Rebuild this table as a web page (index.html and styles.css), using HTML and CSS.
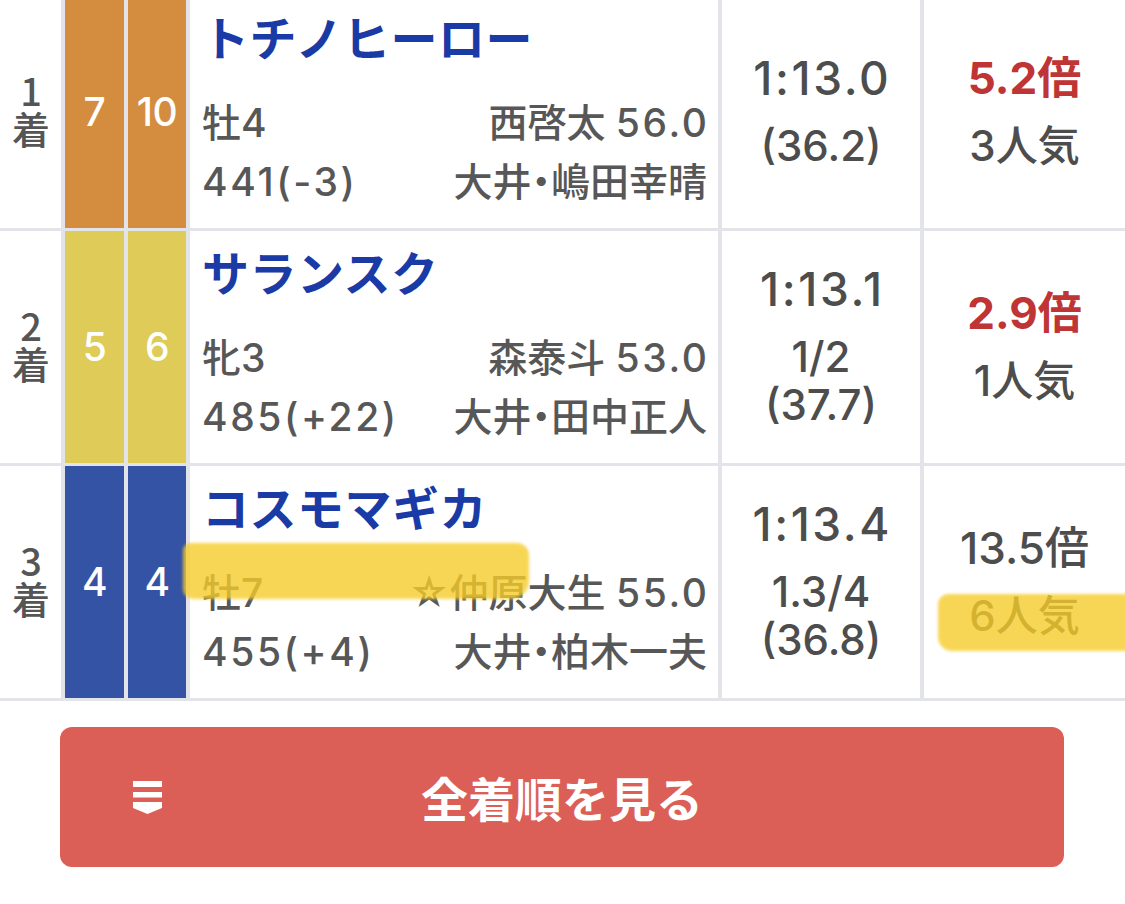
FILE: index.html
```html
<!DOCTYPE html>
<html lang="ja">
<head>
<meta charset="utf-8">
<title>着順</title>
<link rel="stylesheet" href="styles.css">
</head>
<body>
<div class="page">
  <div class="result-table">
    <div class="row">
      <div class="cell rank"><span class="rank-text">1着</span></div>
      <div class="cell waku waku-orange">7</div>
      <div class="cell waku waku-orange">10</div>
      <div class="cell horse">
        <div class="horse-name">トチノヒーロー</div>
        <div class="details">
          <div class="detail-row"><span>牡<span class="num">4</span></span><span>西啓太 <span class="num end">56.0</span></span></div>
          <div class="detail-row"><span class="num">441(-3)</span><span>大井・嶋田幸晴</span></div>
        </div>
      </div>
      <div class="cell stack">
        <div class="main-line">1:13.0</div>
        <div class="sub-line">(36.2)</div>
      </div>
      <div class="cell stack">
        <div class="odds-line odds-hot">5.2倍</div>
        <div class="sub-line">3人気</div>
      </div>
    </div>
    <div class="row">
      <div class="cell rank"><span class="rank-text">2着</span></div>
      <div class="cell waku waku-yellow">5</div>
      <div class="cell waku waku-yellow">6</div>
      <div class="cell horse">
        <div class="horse-name">サランスク</div>
        <div class="details">
          <div class="detail-row"><span>牝<span class="num">3</span></span><span>森泰斗 <span class="num end">53.0</span></span></div>
          <div class="detail-row"><span class="num">485(+22)</span><span>大井・田中正人</span></div>
        </div>
      </div>
      <div class="cell stack">
        <div class="main-line">1:13.1</div>
        <div class="sub-line">1/2</div>
        <div class="sub-line">(37.7)</div>
      </div>
      <div class="cell stack">
        <div class="odds-line odds-hot">2.9倍</div>
        <div class="sub-line">1人気</div>
      </div>
    </div>
    <div class="row">
      <div class="cell rank"><span class="rank-text">3着</span></div>
      <div class="cell waku waku-blue">4</div>
      <div class="cell waku waku-blue">4</div>
      <div class="cell horse">
        <div class="horse-name">コスモマギカ</div>
        <div class="details">
          <div class="detail-row"><span>牡<span class="num">7</span></span><span>☆仲原大生 <span class="num end">55.0</span></span></div>
          <div class="detail-row"><span class="num">455(+4)</span><span>大井・柏木一夫</span></div>
        </div>
      </div>
      <div class="cell stack">
        <div class="main-line">1:13.4</div>
        <div class="sub-line">1.3/4</div>
        <div class="sub-line">(36.8)</div>
      </div>
      <div class="cell stack">
        <div class="odds-line">13.5倍</div>
        <div class="sub-line">6人気</div>
      </div>
    </div>
  </div>

  <button class="all-btn" type="button">
    <span class="btn-icon">
      <svg width="29" height="33" viewBox="0 0 29 33" aria-hidden="true">
        <rect x="0" y="0" width="29" height="6" fill="#fff"/>
        <rect x="0" y="11" width="29" height="5.5" fill="#fff"/>
        <polygon points="0,21 29,21 29,27 14.5,33 0,27" fill="#fff"/>
      </svg>
    </span>
    <span class="btn-label">全着順を見る</span>
    <span class="btn-spacer"></span>
  </button>

  <div class="marker marker-name"></div>
  <div class="marker marker-pop"></div>
</div>
</body>
</html>
```

FILE: styles.css
```css
html, body {
  margin: 0;
  padding: 0;
  background: #ffffff;
}

body {
  width: 1125px;
  height: 904px;
  overflow: hidden;
  font-family: "Inter", "Noto Sans CJK JP", "Noto Sans", sans-serif;
  color: #555555;
}

.page {
  position: relative;
  width: 1125px;
  height: 904px;
}

.result-table {
  display: flex;
  flex-direction: column;
  gap: 3px;
  margin-top: -4px;
  padding-bottom: 3px;
  background: #e3e3ea;
}

.row {
  display: grid;
  grid-template-columns: 61px 59px 58px 528px 198px 1fr;
  column-gap: 4px;
  height: 232px;
}

.cell {
  background: #ffffff;
  box-sizing: border-box;
}

.rank {
  display: flex;
  align-items: center;
  justify-content: center;
  color: #555555;
  padding-bottom: 2px;
}

.rank-text {
  writing-mode: vertical-rl;
  text-orientation: upright;
  font-family: "Noto Sans CJK JP", sans-serif;
  font-size: 38px;
  line-height: 40px;
  font-weight: 500;
}

.waku {
  display: flex;
  align-items: center;
  justify-content: center;
  color: #ffffff;
  font-size: 39px;
  font-weight: 500;
  letter-spacing: -0.5px;
  padding-bottom: 2px;
}

.waku-orange { background: #d48c3e; }
.waku-yellow { background: #dfcb58; }
.waku-blue { background: #3553a4; }

.horse {
  display: flex;
  flex-direction: column;
  padding: 13px 11px 17px 12px;
}

.horse-name {
  font-size: 47px;
  line-height: 60px;
  font-weight: 700;
  letter-spacing: 0.5px;
  color: #1a3aa6;
  white-space: nowrap;
}

.details {
  margin-top: auto;
}

.detail-row {
  display: flex;
  justify-content: space-between;
  font-size: 39px;
  line-height: 59px;
  height: 59px;
  font-weight: 500;
  font-feature-settings: "palt";
  color: #575757;
  white-space: nowrap;
}

.num {
  letter-spacing: 2.6px;
}

.num.end {
  margin-right: -2.6px;
}

.stack {
  display: flex;
  flex-direction: column;
  align-items: center;
  justify-content: center;
  text-align: center;
  color: #4d4d4d;
  padding-bottom: 1px;
}

.main-line {
  font-size: 46px;
  line-height: 48px;
  font-weight: 500;
  letter-spacing: 2.6px;
  padding-left: 2.6px;
  margin-bottom: 20px;
  white-space: nowrap;
}

.odds-line {
  font-size: 44px;
  line-height: 48px;
  font-weight: 500;
  margin-bottom: 20px;
  white-space: nowrap;
}

.sub-line {
  font-size: 42px;
  line-height: 48px;
  font-weight: 500;
  white-space: nowrap;
}

.odds-hot {
  color: #bf3434;
  font-weight: 700;
}

.all-btn {
  display: grid;
  grid-template-columns: 1fr auto 1fr;
  align-items: center;
  width: 1004px;
  height: 140px;
  margin: 26px 0 0 60px;
  padding: 0;
  border: none;
  border-radius: 12px;
  background: #dc5f57;
  color: #ffffff;
  font-family: "Noto Sans CJK JP", "Noto Sans", sans-serif;
}

.btn-icon {
  display: flex;
  justify-content: flex-start;
  padding-left: 73px;
}

.btn-icon svg {
  display: block;
}

.btn-label {
  font-size: 47px;
  font-weight: 700;
  line-height: 60px;
}

.marker {
  position: absolute;
  background: rgba(246, 204, 42, 0.8);
  filter: blur(1.5px);
  pointer-events: none;
}

.marker-name {
  left: 183px;
  top: 547px;
  width: 346px;
  height: 56px;
  border-radius: 8px 12px 18px 10px;
}

.marker-pop {
  left: 938px;
  top: 598px;
  width: 195px;
  height: 57px;
  border-radius: 10px 0 0 14px;
}
```
